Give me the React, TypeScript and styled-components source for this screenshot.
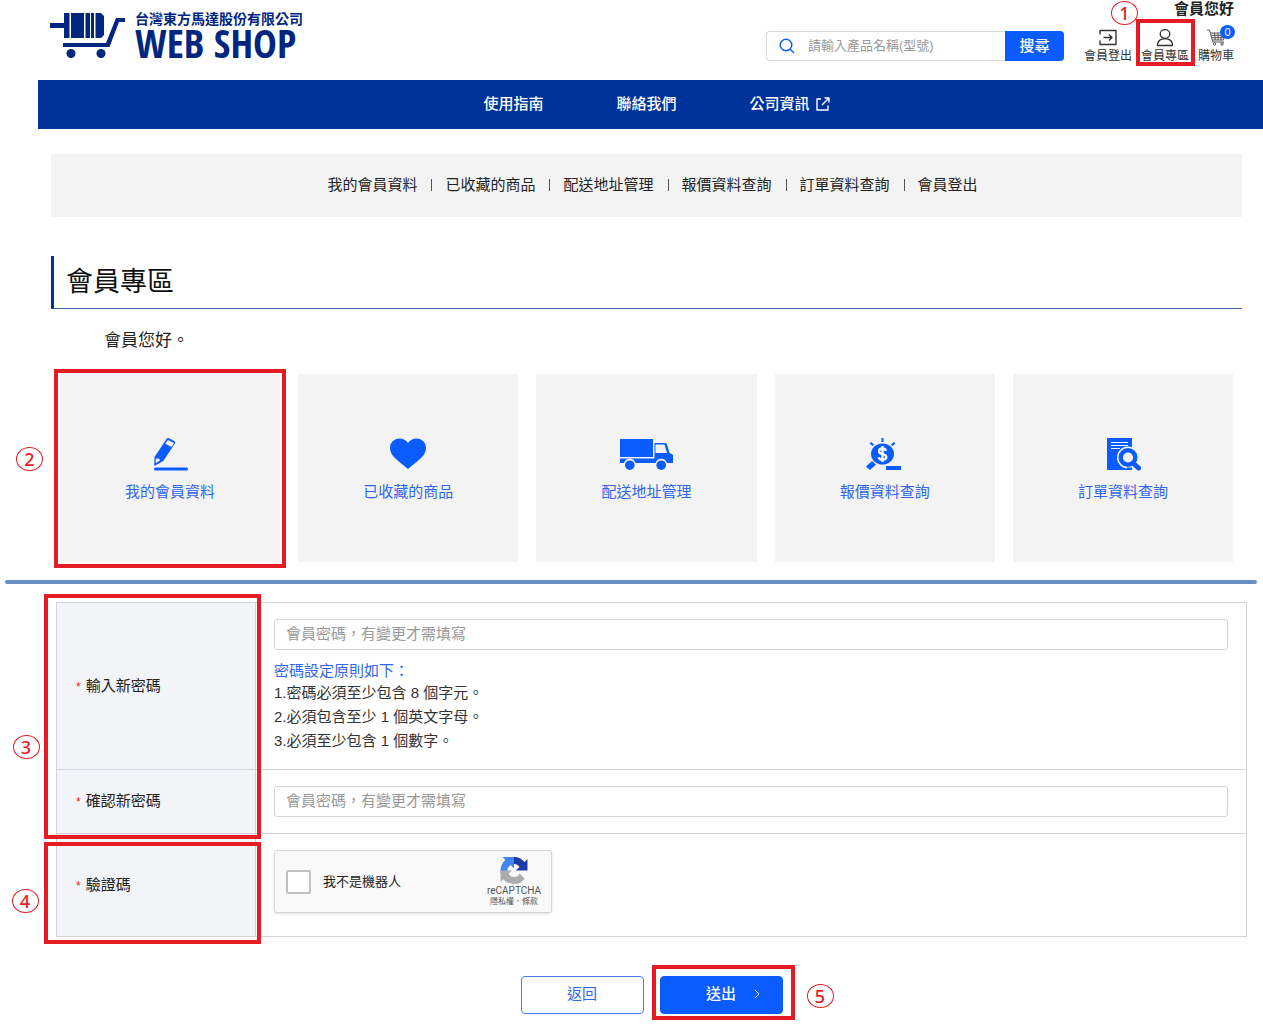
import React from "react";
import styled, { createGlobalStyle } from "styled-components";

const color = {
  navy: "#00267f",
  bar: "#003399",
  blue: "#0a5cff",
  link: "#2f66ee",
  red: "#e51c23",
  panel: "#f3f3f3",
  head: "#f2f4f8",
  line: "#d0d5db",
  text: "#222",
};

const GlobalStyle = createGlobalStyle`
  *, *::before, *::after { box-sizing: border-box; }
  body {
    margin: 0;
    background: #fff;
    color: ${color.text};
    font-family: "Liberation Sans", "Noto Sans CJK TC", sans-serif;
    font-size: 15px;
    line-height: 24px;
  }
  a { color: inherit; text-decoration: none; }
  button, input { font: inherit; }
  svg { display: block; }
`;

const Page = styled.div`
  padding-bottom: 12px;
`;

const Header = styled.header`
  display: flex;
  justify-content: space-between;
  align-items: flex-start;
  height: 80px;
  padding: 0 29px 0 50px;
`;

const Logo = styled.a`
  display: flex;
  gap: 10px;
  padding-top: 11px;
  color: ${color.navy};
`;

const LogoText = styled.span`
  display: flex;
  flex-direction: column;
  white-space: nowrap;
`;

const Company = styled.span`
  font-size: 14px;
  line-height: 16px;
  font-weight: 700;
`;

const ShopName = styled.span`
  font-family: "Liberation Sans Narrow", "Open Sans Condensed", "Roboto Condensed", "DejaVu Sans Condensed", sans-serif;
  font-size: 40px;
  line-height: 32px;
  font-weight: 700;
`;

const HeaderSide = styled.div`
  display: flex;
  flex-direction: column;
  align-items: flex-end;
`;

const Hello = styled.strong`
  line-height: 18px;
`;

const Tools = styled.div`
  display: flex;
  align-items: center;
  gap: 20px;
  margin-top: 11px;
`;

const Search = styled.form`
  display: flex;
  align-items: center;
  width: 298px;
  height: 30px;
  padding-left: 12px;
  border: 1px solid #d9d9d9;
  border-right: 0;
  border-radius: 4px;
`;

const SearchInput = styled.input`
  flex: 1;
  min-width: 0;
  border: 0;
  padding: 0 0 0 13px;
  font-size: 13px;
  outline: none;
  &::placeholder { color: #999; }
`;

const SearchButton = styled.button`
  width: 59px;
  height: 30px;
  border: 0;
  padding: 0;
  border-radius: 0 4px 4px 0;
  background: ${color.blue};
  color: #fff;
  font-weight: 500;
`;

const QuickLinks = styled.nav`
  display: flex;
  gap: 9px;
`;

const QuickLink = styled.a`
  position: relative;
  display: flex;
  flex-direction: column;
  align-items: center;
  gap: 1px;
  font-size: 12px;
  line-height: 14px;
  color: #333;
`;

const Count = styled.span`
  position: absolute;
  top: -4px;
  right: -1px;
  width: 15px;
  height: 14px;
  border-radius: 50%;
  background: ${color.blue};
  color: #fff;
  font-size: 11px;
  line-height: 14px;
  text-align: center;
`;

const MainNav = styled.nav`
  display: flex;
  justify-content: center;
  align-items: center;
  gap: 73px;
  height: 49px;
  margin-left: 38px;
  padding: 0 0 2px 12px;
  background: ${color.bar};
  color: #fff;
  font-weight: 500;
`;

const NavLink = styled.a`
  display: flex;
  align-items: center;
  gap: 6px;
`;

const Main = styled.main`
  padding: 25px 21px 18px 51px;
`;

const SubNav = styled.nav`
  display: flex;
  justify-content: center;
  align-items: center;
  height: 63px;
  padding: 0 0 2px 12px;
  background: ${color.panel};
`;

const Separator = styled.span`
  width: 1px;
  height: 12px;
  margin: 0 13px 0 14px;
  background: #555;
`;

const Title = styled.h1`
  margin: 39px 0 0;
  padding: 6px 0 6px 12px;
  border-left: 3px solid ${color.bar};
  border-bottom: 1px solid #3d64a8;
  font-size: 27px;
  line-height: 40px;
  font-weight: 400;
  color: #111;
`;

const Greeting = styled.p`
  margin: 20px 53px 21px;
  font-size: 17px;
`;

const Cards = styled.div`
  display: grid;
  grid-template-columns: repeat(5, 1fr);
  gap: 18px;
  padding: 0 9px;
`;

const Card = styled.a`
  position: relative;
  display: flex;
  flex-direction: column;
  align-items: center;
  justify-content: center;
  gap: 9px;
  height: 188px;
  padding-top: 5px;
  background: ${color.panel};
  color: ${color.link};
`;

const Divider = styled.hr`
  height: 4px;
  margin: 0 6px 18px 5px;
  border: 0;
  border-radius: 2px;
  background: #6a8fc3;
`;

const Form = styled.form`
  padding: 0 16px 0 56px;
`;

const FormTable = styled.table`
  width: 100%;
  border-collapse: collapse;
  border: 1px solid ${color.line};
`;

const Group = styled.tbody`
  position: relative;
`;

const HeadCell = styled.th`
  width: 199px;
  padding: 0 19px;
  border: 1px solid ${color.line};
  background: ${color.head};
  font-weight: 400;
  text-align: left;
`;

const Cell = styled.td`
  padding: 16px 18px;
  border: 1px solid ${color.line};
`;

const Required = styled.span`
  margin-right: 5px;
  color: ${color.red};
  font-size: 12px;
`;

const TextInput = styled.input`
  display: block;
  width: 100%;
  height: 31px;
  padding: 0 12px 2px 11px;
  border: 1px solid #d4d4d4;
  border-radius: 3px;
  &::placeholder { color: #999; }
`;

const Rules = styled.div`
  margin-top: 11px;
  color: #333;
`;

const RulesTitle = styled.div`
  line-height: 20px;
  color: ${color.link};
`;

const Rule = styled.div``;

const Captcha = styled.div`
  display: flex;
  align-items: center;
  justify-content: space-between;
  width: 278px;
  height: 63px;
  margin-bottom: 7px;
  padding: 0 10px 0 11px;
  border: 1px solid #d6d6d6;
  border-radius: 3px;
  background: #f9f9f9;
  box-shadow: 0 1px 3px rgba(0, 0, 0, 0.12);
`;

const CaptchaLabel = styled.label`
  display: flex;
  align-items: center;
  gap: 12px;
  font-size: 13px;
`;

const CaptchaBox = styled.input`
  appearance: none;
  width: 25px;
  height: 24px;
  margin: 0;
  border: 2px solid #c1c1c1;
  border-radius: 2px;
  background: #fff;
`;

const CaptchaBrand = styled.div`
  display: flex;
  flex-direction: column;
  align-items: center;
  font-family: Roboto, "Noto Sans CJK TC", sans-serif;
  font-size: 10px;
  line-height: 14px;
  color: #555;
`;

const CaptchaTerms = styled.small`
  font-size: 8px;
  line-height: 8px;
`;

const Actions = styled.div`
  display: flex;
  justify-content: center;
  gap: 16px;
  margin-top: 39px;
`;

const Action = styled.div`
  position: relative;
`;

const ActionButton = styled.button<{ $primary?: boolean }>`
  display: flex;
  align-items: center;
  justify-content: center;
  gap: 18px;
  width: 123px;
  height: 38px;
  padding: 0 0 2px ${(p) => (p.$primary ? "24px" : "0")};
  border: 1px solid ${(p) => (p.$primary ? color.blue : "#4b7be8")};
  border-radius: 4px;
  background: ${(p) => (p.$primary ? color.blue : "#fff")};
  color: ${(p) => (p.$primary ? "#fff" : color.link)};
  font-weight: ${(p) => (p.$primary ? 500 : 400)};
`;

const Frame = styled.span<{ $inset: string }>`
  position: absolute;
  z-index: 1;
  inset: ${(p) => p.$inset};
  border: 4px solid ${color.red};
  pointer-events: none;
`;

const HeadFrame = styled(Frame)`
  right: auto;
  width: 217px;
`;

const Step = styled.span<{ $left: number; $top: number }>`
  position: absolute;
  left: ${(p) => p.$left}px;
  top: ${(p) => p.$top}px;
  width: 27px;
  height: 24px;
  border: 1px solid ${color.red};
  border-radius: 50%;
  color: ${color.red};
  font-family: "Noto Sans", sans-serif;
  font-size: 18px;
  line-height: 22px;
  font-weight: 500;
  text-align: center;
  pointer-events: none;
`;

const LogoMark = () => (
  <svg width="75" height="48" viewBox="0 0 75 48" fill="currentColor" aria-hidden="true">
    <path d="M0 12h14V2h5.500v25H14V17H0z" />
    <path d="M21 2h13v25H21zM35.500 2H40v25h-4.500zM41 2h3v25h-3zM45.500 2H51l3 3v19l-3 3h-5.500z" />
    <path d="M13 32h43L66 7h9v4h-6l-9.500 25H13z" />
    <circle cx="21" cy="42.500" r="4.500" />
    <circle cx="51" cy="42.500" r="4.500" />
  </svg>
);

const SearchIcon = () => (
  <svg width="16" height="16" viewBox="0 0 16 16" fill="none" stroke={color.blue} strokeWidth="1.400" aria-hidden="true">
    <circle cx="7" cy="7" r="5.800" />
    <path d="M11.200 11.200L15 15" />
  </svg>
);

const LogoutIcon = () => (
  <svg width="18" height="19" viewBox="0 0 18 19" fill="none" stroke="#333" strokeWidth="1.400" strokeLinejoin="round" aria-hidden="true">
    <path d="M1 5.500V1.500h16v14H1v-4M4.500 8.500H13M10 5.500l3 3-3 3" />
  </svg>
);

const MemberIcon = () => (
  <svg width="18" height="19" viewBox="0 0 18 19" fill="none" stroke="#333" strokeWidth="1.300" strokeLinejoin="round" aria-hidden="true">
    <ellipse cx="9" cy="5" rx="4.800" ry="4.300" />
    <path d="M1.500 16.500c0-4 2.500-6.200 5.500-6.700h4c3 .5 5.500 2.700 5.500 6.700z" />
  </svg>
);

const CartIcon = () => (
  <svg width="20" height="19" viewBox="0 0 20 19" fill="none" stroke="#555" strokeWidth="1" aria-hidden="true">
    <path d="M1 1h2.500l3.300 12H18M4.500 4H19l-1.500 7H6.300M5 6.300h13.500M5.700 8.700H18M8.500 4l.7 7M12 4v7M15.500 4l-.6 7" />
    <circle cx="8.500" cy="15" r="1.200" />
    <circle cx="16" cy="15" r="1.200" />
  </svg>
);

const ExternalIcon = () => (
  <svg width="14" height="14" viewBox="0 0 14 14" fill="none" stroke="#fff" strokeWidth="1.400" strokeLinejoin="round" aria-hidden="true">
    <path d="M5 2H1v11h11V8.500M6 8l7-7M8.500 1H13v4.500" />
  </svg>
);

const PencilIcon = () => (
  <svg width="36" height="34" viewBox="0 0 36 34" fill={color.blue} aria-hidden="true">
    <path fillRule="evenodd" d="M14.500 2c.6-1 1.500-1.200 2.500-.7l5.200 2.700c1 .6 1.300 1.500.7 2.500L11.300 24l-8 4.600c-.6.300-1 0-1-.6L2.500 20zM15.900 3L13.300 6.800l6.300 3.200L21.900 6zM3.800 21.500l-.2 4.800 4.400-2.700-.9-2-2 .2z" />
    <rect x="2" y="30.500" width="34" height="3" rx="1.500" />
  </svg>
);

const HeartIcon = () => (
  <svg width="36" height="34" viewBox="0 0 36 34" fill={color.blue} aria-hidden="true">
    <path d="M18 6C20 3 23 1.500 26.500 1.500c5.500 0 9.500 4.300 9.500 9.500 0 8-8 12.500-18 21C8 23.500 0 19 0 11c0-5.200 4-9.500 9.500-9.500C13 1.500 16 3 18 6z" />
  </svg>
);

const TruckIcon = () => (
  <svg width="54" height="34" viewBox="0 0 54 34" fill={color.blue} aria-hidden="true">
    <path d="M1 2h33v18H1z" />
    <path fillRule="evenodd" d="M1 21.500h34.500V6H46c1 0 1.500.5 2 1.500L50.500 16l3 1.500c.4.200.5.500.5 1V26h-6a6 6 0 0 0-11.500 0H16.500A6 6 0 0 0 5 26H1zM36.500 7.500V16H48l-2.500-8.500z" />
    <circle cx="10.800" cy="28.200" r="4.800" />
    <circle cx="42.200" cy="28.200" r="4.800" />
  </svg>
);

const QuoteIcon = () => (
  <svg width="38" height="34" viewBox="0 0 38 34" fill={color.blue} aria-hidden="true">
    <ellipse cx="16.500" cy="17" rx="11.500" ry="10.500" />
    <path d="M15.500 1h2v4h-2zM3.500 6.500L5 5l3 2.500L6.500 9zM29.500 6.500L28 5l-3 2.500L26.500 9zM0 29.500L6 24l4 3.500L4 33zM20 29h15v4H20z" />
    <path d="M20 13.800c-.5-1.500-1.800-2.300-3.500-2.300-2 0-3.500 1-3.500 2.700 0 4 7.300 2 7.300 5.800 0 1.800-1.600 2.700-3.800 2.700-2 0-3.500-1-3.900-2.500M16.500 9v16" fill="none" stroke="#fff" strokeWidth="2.300" />
  </svg>
);

const OrderIcon = () => (
  <svg width="36" height="34" viewBox="0 0 36 34" fill={color.blue} aria-hidden="true">
    <path d="M2 1h25v32H2z" />
    <path d="M6 5.500h17M6 8.500h17M6 11.500h9" stroke="#fff" strokeWidth="1.200" />
    <circle cx="23" cy="20.500" r="11" fill={color.panel} />
    <path d="M22 30.500l5 0v2.500h-5z" />
    <path d="M28 26l5.500 5" stroke={color.blue} strokeWidth="5" strokeLinecap="round" />
    <circle cx="23" cy="20.500" r="7.300" fill={color.panel} stroke={color.blue} strokeWidth="4.400" />
  </svg>
);

const ArrowIcon = () => (
  <svg width="6" height="10" viewBox="0 0 6 10" fill="none" stroke="#fff" aria-hidden="true">
    <path d="M1 1l4 4-4 4" />
  </svg>
);

const CaptchaIcon = () => (
  <svg width="28" height="27" viewBox="0 0 64 64" aria-hidden="true">
    <path d="M64 31.955l-.033-1.370V4.687l-7.160 7.160C50.948 4.674 42.033.093 32.050.093c-10.400 0-19.622 4.960-25.458 12.640l11.736 11.860a15.550 15.550 0 0 1 4.754-5.334c2.050-1.600 4.952-2.906 8.968-2.906.485 0 .86.057 1.135.163 4.976.393 9.288 3.140 11.828 7.124l-8.307 8.307L64 31.953" fill="#1c3aa9" />
    <path d="M31.862.094l-1.370.033H4.594l7.160 7.160C4.580 13.147 0 22.060 0 32.046c0 10.400 4.960 19.622 12.640 25.458L24.500 45.768a15.550 15.550 0 0 1-5.334-4.754c-1.600-2.050-2.906-4.952-2.906-8.968 0-.485.057-.86.163-1.135.393-4.976 3.140-9.288 7.124-11.828l8.307 8.307L31.860.095" fill="#4285f4" />
    <path d="M.001 32.045l.033 1.370v25.898l7.160-7.160c5.860 7.173 14.774 11.754 24.760 11.754 10.400 0 19.622-4.960 25.458-12.640l-11.736-11.860a15.550 15.550 0 0 1-4.754 5.334c-2.050 1.600-4.952 2.906-8.968 2.906-.485 0-.86-.057-1.135-.163-4.976-.393-9.288-3.140-11.828-7.124l8.307-8.307c-10.522.04-22.400.066-27.295-.005" fill="#ababab" />
  </svg>
);

const memberLinks = ["我的會員資料", "已收藏的商品", "配送地址管理", "報價資料查詢", "訂單資料查詢"];
const cardIcons = [PencilIcon, HeartIcon, TruckIcon, QuoteIcon, OrderIcon];

export default function App() {
  return (
    <>
      <GlobalStyle />
      <Page>
        <Header>
          <Logo href="#">
            <LogoMark />
            <LogoText>
              <Company>台灣東方馬達股份有限公司</Company>
              <ShopName>WEB SHOP</ShopName>
            </LogoText>
          </Logo>
          <HeaderSide>
            <Hello>會員您好</Hello>
            <Tools>
              <Search onSubmit={(e) => e.preventDefault()}>
                <SearchIcon />
                <SearchInput aria-label="搜尋" placeholder="請輸入產品名稱(型號)" />
                <SearchButton type="submit">搜尋</SearchButton>
              </Search>
              <QuickLinks>
                <QuickLink href="#">
                  <LogoutIcon />
                  會員登出
                </QuickLink>
                <QuickLink href="#">
                  <MemberIcon />
                  會員專區
                  <Frame $inset="-10px -6px -3px -5px" />
                  <Step $left={-30} $top={-28}>1</Step>
                </QuickLink>
                <QuickLink href="#">
                  <CartIcon />
                  購物車
                  <Count>0</Count>
                </QuickLink>
              </QuickLinks>
            </Tools>
          </HeaderSide>
        </Header>

        <MainNav>
          <NavLink href="#">使用指南</NavLink>
          <NavLink href="#">聯絡我們</NavLink>
          <NavLink href="#">
            公司資訊
            <ExternalIcon />
          </NavLink>
        </MainNav>

        <Main>
          <SubNav>
            {memberLinks.map((label) => (
              <React.Fragment key={label}>
                <a href="#">{label}</a>
                <Separator />
              </React.Fragment>
            ))}
            <a href="#">會員登出</a>
          </SubNav>
          <Title>會員專區</Title>
          <Greeting>會員您好。</Greeting>
          <Cards>
            {memberLinks.map((label, i) => {
              const Icon = cardIcons[i];
              return (
                <Card href="#" key={label}>
                  <Icon />
                  {label}
                  {i === 0 && (
                    <>
                      <Frame $inset="-5px -6px -6px -6px" />
                      <Step $left={-44} $top={73}>2</Step>
                    </>
                  )}
                </Card>
              );
            })}
          </Cards>
        </Main>

        <Divider />

        <Form onSubmit={(e) => e.preventDefault()}>
          <FormTable>
            <Group>
              <tr>
                <HeadCell scope="row">
                  <Required>*</Required>
                  <label htmlFor="new-password">輸入新密碼</label>
                  <HeadFrame $inset="-9px auto -5px -13px" />
                  <Step $left={-44} $top={132}>3</Step>
                </HeadCell>
                <Cell>
                  <TextInput id="new-password" type="password" placeholder="會員密碼，有變更才需填寫" />
                  <Rules>
                    <RulesTitle>密碼設定原則如下：</RulesTitle>
                    <Rule>1.密碼必須至少包含 8 個字元。</Rule>
                    <Rule>2.必須包含至少 1 個英文字母。</Rule>
                    <Rule>3.必須至少包含 1 個數字。</Rule>
                  </Rules>
                </Cell>
              </tr>
              <tr>
                <HeadCell scope="row">
                  <Required>*</Required>
                  <label htmlFor="confirm-password">確認新密碼</label>
                </HeadCell>
                <Cell>
                  <TextInput id="confirm-password" type="password" placeholder="會員密碼，有變更才需填寫" />
                </Cell>
              </tr>
            </Group>
            <Group>
              <tr>
                <HeadCell scope="row">
                  <Required>*</Required>
                  驗證碼
                  <HeadFrame $inset="8px auto -7px -13px" />
                  <Step $left={-45} $top={55}>4</Step>
                </HeadCell>
                <Cell>
                  <Captcha>
                    <CaptchaLabel>
                      <CaptchaBox type="checkbox" />
                      我不是機器人
                    </CaptchaLabel>
                    <CaptchaBrand>
                      <CaptchaIcon />
                      reCAPTCHA
                      <CaptchaTerms>隱私權．條款</CaptchaTerms>
                    </CaptchaBrand>
                  </Captcha>
                </Cell>
              </tr>
            </Group>
          </FormTable>
          <Actions>
            <Action>
              <ActionButton type="button">返回</ActionButton>
            </Action>
            <Action>
              <ActionButton type="submit" $primary>
                送出
                <ArrowIcon />
              </ActionButton>
              <Frame $inset="-11px -12px -6px -8px" />
              <Step $left={147} $top={8}>5</Step>
            </Action>
          </Actions>
        </Form>
      </Page>
    </>
  );
}
